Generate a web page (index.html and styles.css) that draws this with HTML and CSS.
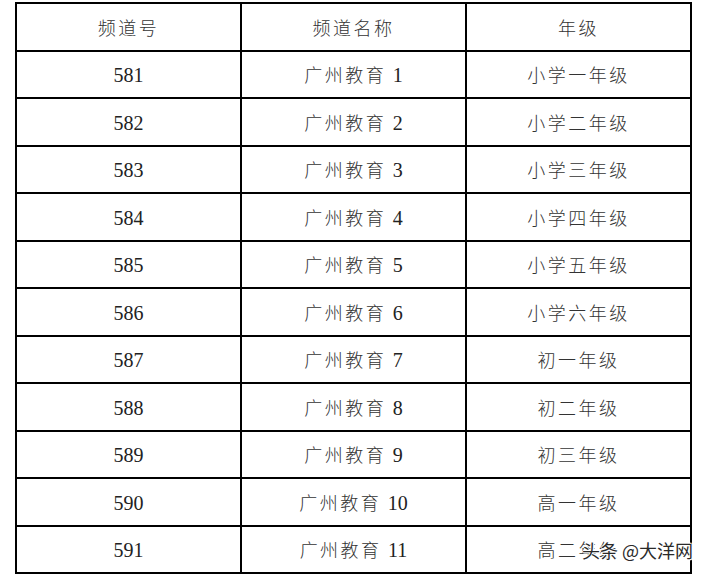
FILE: index.html
```html
<!DOCTYPE html>
<html lang="zh-CN">
<head>
<meta charset="utf-8">
<title>频道表</title>
<link rel="stylesheet" href="styles.css">
</head>
<body>
<div class="page">
<table class="grid">
  <thead>
    <tr><th>频道号</th><th>频道名称</th><th>年级</th></tr>
  </thead>
  <tbody>
    <tr><td><span class="num">581</span></td><td>广州教育 <span class="num">1</span></td><td>小学一年级</td></tr>
    <tr><td><span class="num">582</span></td><td>广州教育 <span class="num">2</span></td><td>小学二年级</td></tr>
    <tr><td><span class="num">583</span></td><td>广州教育 <span class="num">3</span></td><td>小学三年级</td></tr>
    <tr><td><span class="num">584</span></td><td>广州教育 <span class="num">4</span></td><td>小学四年级</td></tr>
    <tr><td><span class="num">585</span></td><td>广州教育 <span class="num">5</span></td><td>小学五年级</td></tr>
    <tr><td><span class="num">586</span></td><td>广州教育 <span class="num">6</span></td><td>小学六年级</td></tr>
    <tr><td><span class="num">587</span></td><td>广州教育 <span class="num">7</span></td><td>初一年级</td></tr>
    <tr><td><span class="num">588</span></td><td>广州教育 <span class="num">8</span></td><td>初二年级</td></tr>
    <tr><td><span class="num">589</span></td><td>广州教育 <span class="num">9</span></td><td>初三年级</td></tr>
    <tr><td><span class="num">590</span></td><td>广州教育 <span class="num">10</span></td><td>高一年级</td></tr>
    <tr><td><span class="num">591</span></td><td>广州教育 <span class="num">11</span></td><td>高二年级</td></tr>
  </tbody>
</table>
<div class="watermark">头条 @大洋网</div>
</div>
</body>
</html>
```

FILE: styles.css
```css
html, body {
  margin: 0;
  padding: 0;
  background: #fff;
}

.page {
  position: relative;
  width: 711px;
  height: 583px;
  padding: 2px 0 0 15px;
  box-sizing: border-box;
}

.grid {
  border-collapse: collapse;
  width: 677px;
  table-layout: fixed;
}

.grid th,
.grid td {
  border: 2px solid #000;
  height: 47.5px;
  padding: 0;
  text-align: center;
  vertical-align: middle;
  font-family: "Noto Sans CJK SC", "Liberation Serif", serif;
  font-weight: 300;
  font-size: 18px;
  letter-spacing: 2.5px;
  color: #333;
  box-sizing: border-box;
}

.grid tr {
  height: 47.5px;
}

.num {
  font-family: "Liberation Serif", serif;
  font-weight: 400;
  font-size: 20px;
  letter-spacing: 0;
  color: #222;
}

.watermark {
  position: absolute;
  left: 582px;
  top: 537px;
  font-family: "Noto Sans CJK SC", sans-serif;
  font-size: 18px;
  line-height: 26px;
  color: #2a2a2a;
  white-space: nowrap;
  text-shadow: 1px 0 0 #fff, -1px 0 0 #fff, 0 1px 0 #fff, 0 -1px 0 #fff, 1px 1px 1px #fff;
}
```
